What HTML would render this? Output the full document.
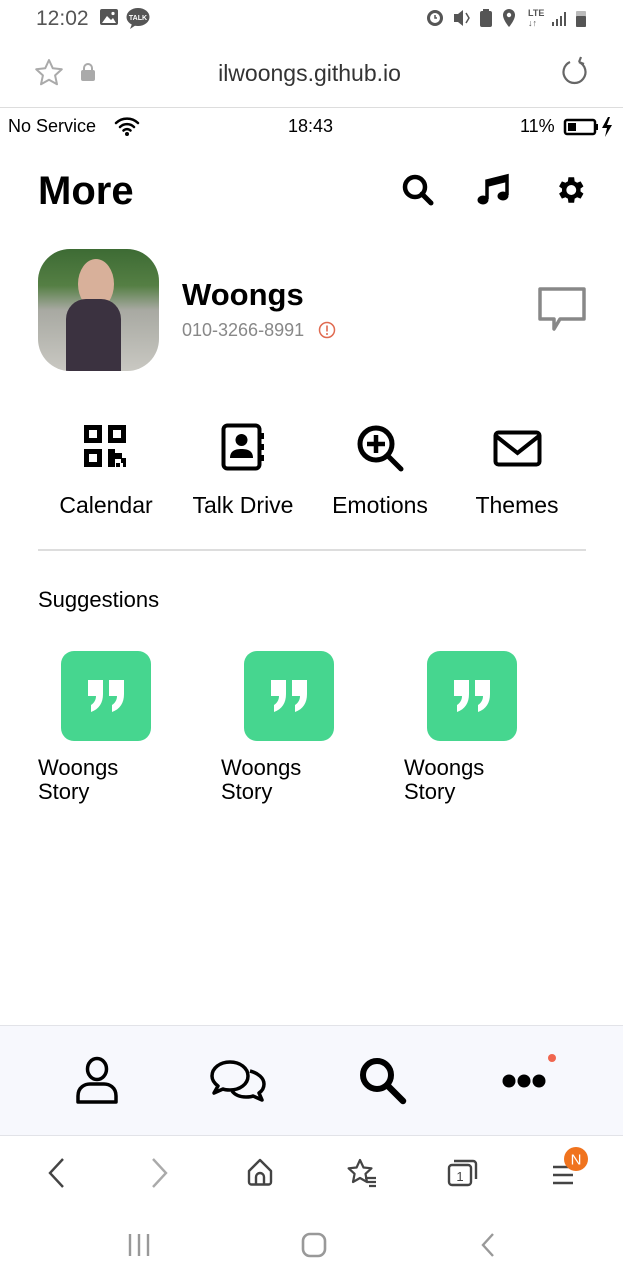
<!DOCTYPE html>
<html><head><meta charset="utf-8"><style>
*{margin:0;padding:0;box-sizing:border-box}
body{width:623px;height:1280px;position:relative;background:#fff;font-family:"Liberation Sans",sans-serif;overflow:hidden;color:#000}
.a{position:absolute}
.t{position:absolute;white-space:nowrap;line-height:1}
svg{position:absolute;overflow:visible}
.tile{position:absolute;width:90px;height:90px;border-radius:13px;background:#46d68f}
</style></head><body>
<!-- phone status bar -->
<div class="t" style="left:36px;top:8px;font-size:21px;color:#555">12:02</div>
<svg style="left:100px;top:9px" width="20" height="18"><rect x="0" y="0" width="18" height="16" rx="2" fill="#555"/><path d="M2 14 L7 7 L11 11 L13 9 L16 14Z" fill="#fff"/><circle cx="13" cy="4.5" r="1.6" fill="#fff"/></svg>
<svg style="left:126px;top:8px" width="26" height="22"><ellipse cx="12" cy="9" rx="11.5" ry="9" fill="#555"/><path d="M6 16 L4 21 L10 17Z" fill="#555"/><text x="12" y="12" font-size="7" fill="#fff" text-anchor="middle" font-family="Liberation Sans" font-weight="bold">TALK</text></svg>
<svg style="left:424px;top:7px" width="170" height="22" fill="#555">
<circle cx="11" cy="11" r="8"/><circle cx="11" cy="11" r="5" fill="#fff"/><path d="M11 8v3h2" stroke="#555" stroke-width="1.5" fill="none"/>
<path d="M30 7h4l5-4v16l-5-4h-4z"/><path d="M42 6l3 5-3 5" stroke="#555" stroke-width="1.5" fill="none"/>
<rect x="56" y="4" width="12" height="16" rx="2"/><rect x="59" y="2" width="6" height="3"/>
<path d="M85 2a6 6 0 0 1 6 6c0 5-6 12-6 12s-6-7-6-12a6 6 0 0 1 6-6z"/><circle cx="85" cy="8" r="2.2" fill="#fff"/>
<text x="104" y="9" font-size="9" font-family="Liberation Sans" font-weight="bold">LTE</text><text x="104" y="19" font-size="9" font-family="Liberation Sans">↓↑</text>
<rect x="128" y="15" width="2" height="4"/><rect x="132" y="12" width="2" height="7"/><rect x="136" y="9" width="2" height="10"/><rect x="140" y="5" width="2" height="14"/>
<rect x="152" y="4" width="10" height="16" rx="1" fill="#bbb"/><rect x="152" y="9" width="10" height="11" rx="1"/>
</svg>
<!-- url bar -->
<svg style="left:34px;top:58px" width="30" height="30"><path d="M15 2l3.8 8.3 9 1-6.7 6.1 1.9 8.9L15 21.8 7 26.3l1.9-8.9L2.2 11.3l9-1z" fill="none" stroke="#aaa" stroke-width="2" stroke-linejoin="round"/></svg>
<svg style="left:81px;top:63px" width="14" height="18"><rect x="0" y="7" width="14" height="11" rx="2" fill="#aaa"/><path d="M3 8V5a4 4 0 0 1 8 0v3" fill="none" stroke="#aaa" stroke-width="2"/></svg>
<div class="t" style="left:0;width:623px;text-align:center;top:62px;font-size:23px;color:#333;padding-right:4px">ilwoongs.github.io</div>
<svg style="left:560px;top:58px" width="30" height="30"><path d="M10 4 A11 11 0 1 0 19 4" fill="none" stroke="#666" stroke-width="2.2"/><path d="M19 4 L21 -1 M19 4 L24 6" stroke="#666" stroke-width="2.2" fill="none"/></svg>
<div class="a" style="left:0;top:107px;width:623px;height:1px;background:#ddd"></div>
<!-- inner status -->
<div class="t" style="left:8px;top:117px;font-size:18px">No Service</div>
<svg style="left:114px;top:116px" width="26" height="20"><path d="M2 7a16 16 0 0 1 22 0M6 11a10 10 0 0 1 14 0M9.5 14.5a5 5 0 0 1 7 0" fill="none" stroke="#000" stroke-width="2.5" stroke-linecap="round"/><circle cx="13" cy="18" r="2" fill="#000"/></svg>
<div class="t" style="left:288px;top:117px;font-size:18px">18:43</div>
<div class="t" style="left:520px;top:117px;font-size:18px">11%</div>
<svg style="left:563px;top:117px" width="60" height="20"><rect x="2" y="3" width="30" height="14" rx="2" fill="none" stroke="#000" stroke-width="2.5"/><rect x="5" y="6" width="8" height="8" fill="#000"/><rect x="32" y="7" width="3" height="6" fill="#000"/><path d="M45 0l-6 11h5l-2 9 7-12h-5l3-8z" fill="#000"/></svg>
<!-- header -->
<div class="t" style="left:38px;top:171px;font-size:40px;font-weight:bold">More</div>
<svg style="left:401px;top:173px" width="34" height="34"><circle cx="14" cy="14" r="10" fill="none" stroke="#000" stroke-width="4.5"/><path d="M21 21l9 9" stroke="#000" stroke-width="5" stroke-linecap="round"/></svg>
<svg style="left:477px;top:173px" width="34" height="34"><path d="M10 26V8L30 3v19" fill="none" stroke="#000" stroke-width="3.5"/><path d="M10 8L30 3v6L10 14z" fill="#000"/><ellipse cx="6" cy="27" rx="5.5" ry="4.5" fill="#000"/><ellipse cx="26" cy="23" rx="5.5" ry="4.5" fill="#000"/></svg>
<svg style="left:553px;top:173px" width="34" height="34" viewBox="0 0 24 24"><path fill="#000" d="M19.4 13a7.5 7.5 0 0 0 0-2l2.1-1.6-2-3.5-2.5 1a7.6 7.6 0 0 0-1.7-1L14.9 3h-4l-.4 2.9a7.6 7.6 0 0 0-1.7 1l-2.5-1-2 3.5L6.4 11a7.5 7.5 0 0 0 0 2l-2.1 1.6 2 3.5 2.5-1c.5.4 1.1.7 1.7 1l.4 2.9h4l.4-2.9c.6-.3 1.2-.6 1.7-1l2.5 1 2-3.5zM12.9 15.5a3.5 3.5 0 1 1 0-7 3.5 3.5 0 0 1 0 7z"/></svg>
<!-- profile -->
<div class="a" style="left:38px;top:249px;width:121px;height:122px;border-radius:32px;overflow:hidden;background:linear-gradient(180deg,#3d6b34 0%,#557f44 30%,#a8a9a2 50%,#c9c8c2 100%)">
<div class="a" style="left:40px;top:10px;width:36px;height:50px;border-radius:50%;background:#d8b09a"></div>
<div class="a" style="left:28px;top:50px;width:55px;height:72px;border-radius:20px 20px 0 0;background:#3b3240"></div>
</div>
<div class="t" style="left:182px;top:279px;font-size:31px;font-weight:bold">Woongs</div>
<div class="t" style="left:182px;top:321px;font-size:18px;color:#888">010-3266-8991</div>
<svg style="left:318px;top:321px" width="18" height="18"><circle cx="9" cy="9" r="7.5" fill="none" stroke="#e06a50" stroke-width="1.5"/><path d="M9 4.5v6" stroke="#e06a50" stroke-width="1.6"/><circle cx="9" cy="13" r="1" fill="#e06a50"/></svg>
<svg style="left:537px;top:286px" width="50" height="48"><path d="M3 3h44v30H23l-6 10v-10H3z" fill="none" stroke="#888" stroke-width="3.5" stroke-linejoin="round"/></svg>
<!-- menu -->
<svg style="left:84px;top:425px" width="46" height="46" fill="#000"><rect x="0" y="0" width="18" height="18"/><rect x="5" y="5" width="8" height="8" fill="#fff"/><rect x="24" y="0" width="18" height="18"/><rect x="29" y="5" width="8" height="8" fill="#fff"/><rect x="0" y="24" width="18" height="18"/><rect x="5" y="29" width="8" height="8" fill="#fff"/><rect x="24" y="24" width="7" height="18"/><rect x="31" y="28" width="7" height="6"/><rect x="37" y="33" width="5" height="5"/><rect x="32" y="38" width="4" height="4"/><rect x="39" y="38" width="3" height="4"/></svg>
<svg style="left:221px;top:423px" width="46" height="50"><rect x="2.5" y="2.5" width="36" height="43" rx="4" fill="none" stroke="#000" stroke-width="4"/><rect x="38" y="10" width="5" height="6" fill="#000"/><rect x="38" y="21" width="5" height="6" fill="#000"/><rect x="38" y="32" width="5" height="6" fill="#000"/><circle cx="20.5" cy="17" r="6" fill="#000"/><path d="M9 35c0-7 5-9 11.5-9s11.5 2 11.5 9z" fill="#000"/></svg>
<svg style="left:356px;top:424px" width="50" height="50"><circle cx="20" cy="20" r="16" fill="none" stroke="#000" stroke-width="5"/><path d="M20 11v18M11 20h18" stroke="#000" stroke-width="4.5"/><path d="M32 32l13 13" stroke="#000" stroke-width="5" stroke-linecap="round"/></svg>
<svg style="left:493px;top:430px" width="50" height="38"><rect x="2.5" y="2.5" width="44" height="32" rx="3" fill="none" stroke="#000" stroke-width="4"/><path d="M3 6l21.5 17L46 6" fill="none" stroke="#000" stroke-width="4"/></svg>
<div class="t" style="left:38px;width:136px;text-align:center;top:494px;font-size:23px">Calendar</div>
<div class="t" style="left:175px;width:136px;text-align:center;top:494px;font-size:23px">Talk Drive</div>
<div class="t" style="left:312px;width:136px;text-align:center;top:494px;font-size:23px">Emotions</div>
<div class="t" style="left:449px;width:136px;text-align:center;top:494px;font-size:23px">Themes</div>
<div class="a" style="left:38px;top:549px;width:548px;height:2px;background:#ddd"></div>
<div class="t" style="left:38px;top:589px;font-size:22px">Suggestions</div>
<!-- tiles -->
<div class="tile" style="left:61px;top:651px"></div>
<div class="tile" style="left:244px;top:651px"></div>
<div class="tile" style="left:427px;top:651px"></div>
<svg style="left:88px;top:680px" width="40" height="34" fill="#fff"><path d="M0 0h15v14c0 9-4 15-12 18v-7c3-2 5-5 5-9H0z"/><path d="M21 0h15v14c0 9-4 15-12 18v-7c3-2 5-5 5-9h-8z"/></svg>
<svg style="left:271px;top:680px" width="40" height="34" fill="#fff"><path d="M0 0h15v14c0 9-4 15-12 18v-7c3-2 5-5 5-9H0z"/><path d="M21 0h15v14c0 9-4 15-12 18v-7c3-2 5-5 5-9h-8z"/></svg>
<svg style="left:454px;top:680px" width="40" height="34" fill="#fff"><path d="M0 0h15v14c0 9-4 15-12 18v-7c3-2 5-5 5-9H0z"/><path d="M21 0h15v14c0 9-4 15-12 18v-7c3-2 5-5 5-9h-8z"/></svg>
<div class="a" style="left:38px;top:756px;font-size:22px;line-height:24px">Woongs<br>Story</div>
<div class="a" style="left:221px;top:756px;font-size:22px;line-height:24px">Woongs<br>Story</div>
<div class="a" style="left:404px;top:756px;font-size:22px;line-height:24px">Woongs<br>Story</div>
<!-- bottom nav -->
<div class="a" style="left:0;top:1025px;width:623px;height:111px;background:#f7f8fd;border-top:1px solid #e2e3e8;border-bottom:1px solid #e2e3e8"></div>
<svg style="left:75px;top:1056px" width="44" height="50"><ellipse cx="22" cy="13" rx="9.5" ry="10.5" fill="none" stroke="#000" stroke-width="3.5"/><path d="M3 46v-6c0-9 7-12 12-12h14c5 0 12 3 12 12v6z" fill="none" stroke="#000" stroke-width="3.5" stroke-linejoin="round"/></svg>
<svg style="left:210px;top:1060px" width="58" height="44"><path d="M20 2c10 0 18 6 18 14s-8 14-18 14c-3 0-5 0-7-1l-9 4 4-7C4 23 2 20 2 16 2 8 10 2 20 2z" fill="none" stroke="#000" stroke-width="3.5" stroke-linejoin="round"/><path d="M40 11c8 2 14 7 14 13 0 4-2 7-5 9l3 7-9-4c-2 1-5 1-7 1-6 0-11-2-14-6" fill="none" stroke="#000" stroke-width="3.5" stroke-linejoin="round"/></svg>
<svg style="left:358px;top:1056px" width="50" height="50"><circle cx="19" cy="19" r="14" fill="none" stroke="#000" stroke-width="6"/><path d="M30 30l15 15" stroke="#000" stroke-width="6.5" stroke-linecap="round"/></svg>
<svg style="left:500px;top:1050px" width="60" height="40" fill="#000"><circle cx="9" cy="31" r="6.5"/><circle cx="24" cy="31" r="6.5"/><circle cx="39" cy="31" r="6.5"/><circle cx="52" cy="8" r="4" fill="#f0664f"/></svg>
<!-- browser bar -->
<svg style="left:45px;top:1157px" width="24" height="32"><path d="M18 2L5 16l13 14" fill="none" stroke="#444" stroke-width="2.4"/></svg>
<svg style="left:148px;top:1157px" width="24" height="32"><path d="M5 2l13 14L5 30" fill="none" stroke="#aaa" stroke-width="2.4"/></svg>
<svg style="left:246px;top:1157px" width="30" height="30"><path d="M3 14L14 3l11 11v11a2.5 2.5 0 0 1-2.5 2.5h-17A2.5 2.5 0 0 1 3 25z" fill="none" stroke="#444" stroke-width="2.4" stroke-linejoin="round"/><path d="M10 28v-8a4 4 0 0 1 8 0v8" fill="none" stroke="#444" stroke-width="2.4"/></svg>
<svg style="left:345px;top:1157px" width="34" height="32"><path d="M15 3l3.5 7.5 8 .8-6 5.5L22 25l-7-4-7 4 1.6-8.2-6-5.5 8-.8z" fill="none" stroke="#444" stroke-width="2.2" stroke-linejoin="round"/><path d="M20 21h11M22 25h9M24 29h7" stroke="#444" stroke-width="2.2"/></svg>
<svg style="left:446px;top:1157px" width="34" height="32"><rect x="3" y="8" width="22" height="20" rx="3" fill="none" stroke="#444" stroke-width="2.4"/><path d="M8 4h19a3 3 0 0 1 3 3v15" fill="none" stroke="#444" stroke-width="2.4"/><text x="14" y="24" font-size="13" text-anchor="middle" fill="#444" font-family="Liberation Sans">1</text></svg>
<svg style="left:550px;top:1145px" width="42" height="40"><path d="M3 22h20M3 30h20M3 38h20" stroke="#444" stroke-width="2.4"/><circle cx="26" cy="14" r="12" fill="#f0731e"/><text x="26" y="19.5" font-size="15" text-anchor="middle" fill="#fff" font-family="Liberation Sans">N</text></svg>
<!-- system nav -->
<svg style="left:127px;top:1232px" width="26" height="26"><path d="M3 2v22M12 2v22M21 2v22" stroke="#999" stroke-width="2.4"/></svg>
<svg style="left:300px;top:1231px" width="28" height="28"><rect x="3" y="3" width="22" height="22" rx="7" fill="none" stroke="#999" stroke-width="2.6"/></svg>
<svg style="left:478px;top:1232px" width="22" height="26"><path d="M15 2L5 13l10 11" fill="none" stroke="#999" stroke-width="2.4"/></svg>
</body></html>
